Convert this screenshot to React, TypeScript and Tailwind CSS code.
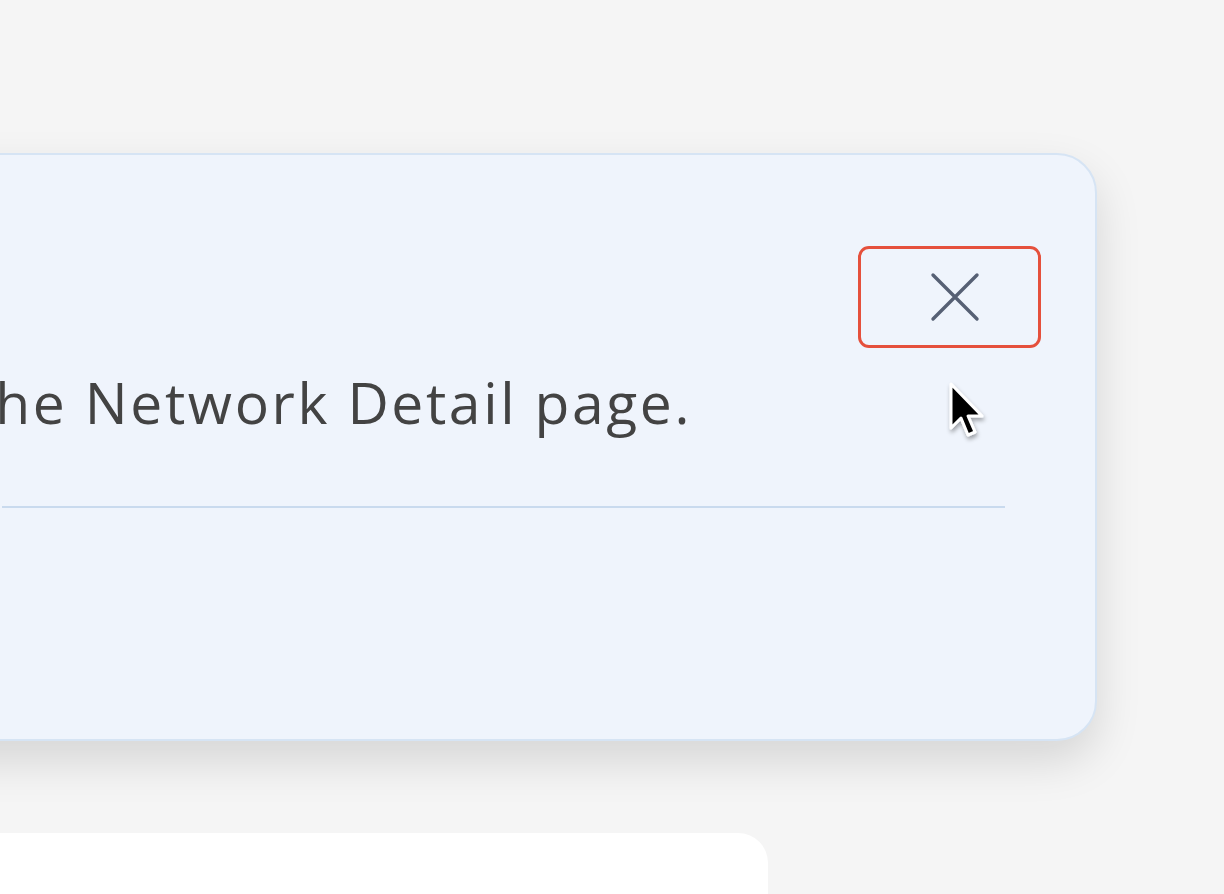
import React from "react";

export default function App() {
  return (
    <div
      className="relative h-[894px] w-[1224px] overflow-hidden bg-[#f5f5f5]"
      style={{ fontFamily: "'Open Sans', Lato, sans-serif" }}
    >
      <div className="pt-[153px]">
        <div className="ml-[-300px] w-[1397px] h-[588px] rounded-[40px] border-2 border-[#d6e4f4] bg-[#eff4fc] shadow-[0_20px_45px_rgba(0,0,0,0.13)] pl-[300px] pr-[54px]">
          <div className="flex h-[92px] items-end justify-end">
            <button className="flex h-[102px] w-[183px] translate-y-[101px] items-center justify-center rounded-[11px] border-[3px] border-[#e5503c]">
              <svg className="ml-[10px]" width="52" height="52" viewBox="0 0 52 52" fill="none">
                <path d="M4 4 L48 48 M48 4 L4 48" stroke="#566074" strokeWidth="3.4" strokeLinecap="round" />
              </svg>
            </button>
          </div>
          <div className="flex w-[690px] justify-end whitespace-nowrap pt-[120px] text-[57px] font-medium tracking-[2.6px] leading-[70px] text-[#434343]">
            the Network Detail page.
          </div>
          <div className="mt-[69px] h-[2px] w-[1003px] bg-[#c9daee]" />
        </div>
      </div>
      <div className="ml-[-100px] mt-[92px] h-[100px] w-[868px] rounded-[30px] bg-white" />
      <svg
        className="absolute left-[946px] top-[380px]"
        width="48"
        height="70"
        viewBox="0 0 48 70"
      >
        <defs>
          <filter id="sh" x="-50%" y="-50%" width="200%" height="200%">
            <feDropShadow dx="1" dy="3" stdDeviation="2" floodColor="#000" floodOpacity="0.35" />
          </filter>
        </defs>
        <path
          d="M5 4 L5 48 L15 38 L22 55 L29 52 L22 36 L36 36 Z"
          fill="#000"
          stroke="#fff"
          strokeWidth="3"
          strokeLinejoin="round"
          filter="url(#sh)"
        />
      </svg>
    </div>
  );
}
